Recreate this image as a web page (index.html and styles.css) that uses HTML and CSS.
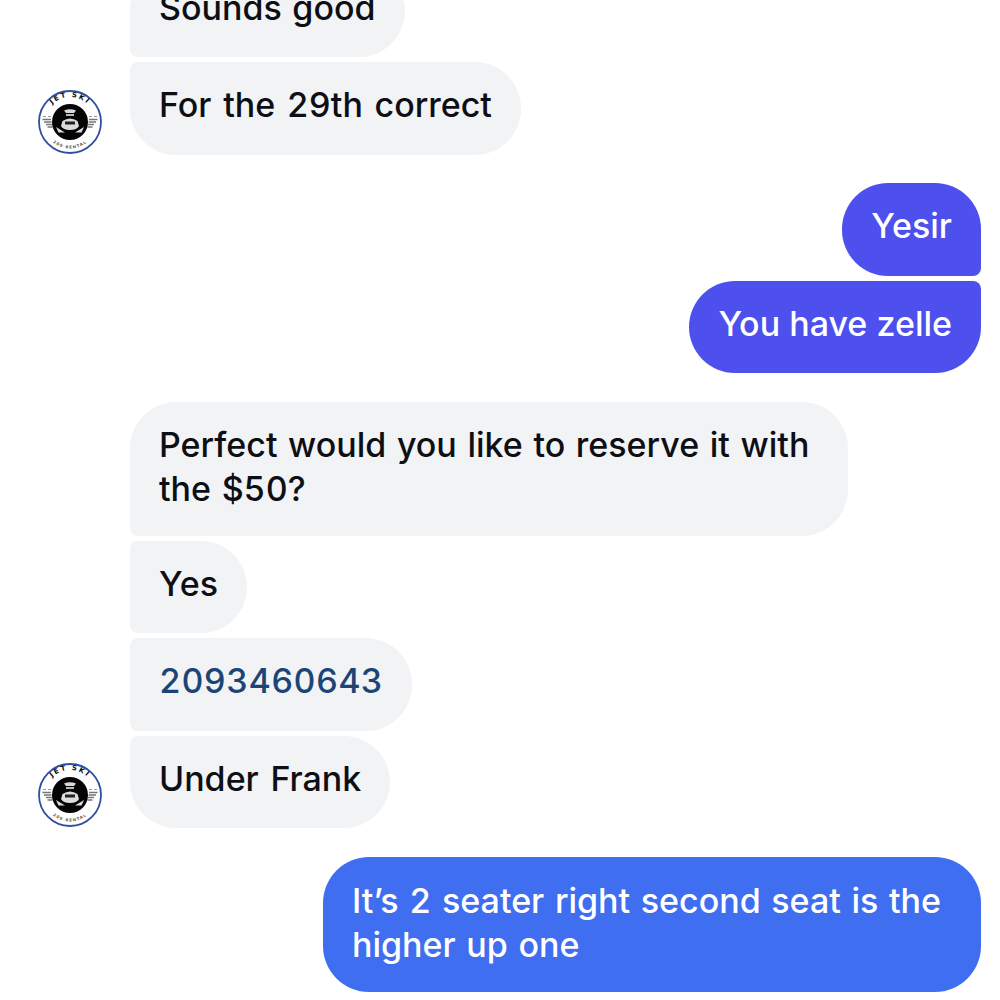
FILE: index.html
```html
<!DOCTYPE html>
<html lang="en">
<head>
<meta charset="utf-8">
<title>Conversation</title>
<link rel="stylesheet" href="styles.css">
</head>
<body>
<main class="thread">
  <section class="group">
    <div class="row"><div class="avatar-slot"></div><div class="bubble in first">Sounds good</div></div>
    <div class="row">
      <div class="avatar-slot">
        <svg class="avatar" viewBox="0 0 66 66" aria-hidden="true"><use href="#logo"/></svg>
      </div>
      <div class="bubble in last loose">For the 29th correct</div>
    </div>
  </section>
  <section class="group out">
    <div class="row"><div class="bubble sent-a first">Yesir</div></div>
    <div class="row"><div class="bubble sent-a last">You have zelle</div></div>
  </section>
  <section class="group">
    <div class="row"><div class="avatar-slot"></div><div class="bubble in first two-line wide-a">Perfect would you like to reserve it with the $50?</div></div>
    <div class="row"><div class="avatar-slot"></div><div class="bubble in mid">Yes</div></div>
    <div class="row"><div class="avatar-slot"></div><div class="bubble in mid link">2093460643</div></div>
    <div class="row">
      <div class="avatar-slot">
        <svg class="avatar" viewBox="0 0 66 66" aria-hidden="true"><use href="#logo"/></svg>
      </div>
      <div class="bubble in last loose">Under Frank</div>
    </div>
  </section>
  <section class="group out">
    <div class="row"><div class="bubble sent-b solo two-line wide-b">It’s 2 seater right second seat is the higher up one</div></div>
  </section>
</main>
<svg class="defs" aria-hidden="true">
  <defs>
    <symbol id="logo" viewBox="0 0 66 66">
      <circle cx="33" cy="33" r="31" fill="#fff" stroke="#2f4f9e" stroke-width="1.8"/>
      <path id="arcTop" d="M8 33a25 25 0 0 1 50 0" fill="none"/>
      <path id="arcBottom" d="M6.500 33a26.500 26.500 0 0 0 53 0" fill="none"/>
      <text class="logo-top"><textPath href="#arcTop" startOffset="50%" text-anchor="middle">JET SKI</textPath></text>
      <text class="logo-bottom"><textPath href="#arcBottom" startOffset="50%" text-anchor="middle">209 RENTAL</textPath></text>
      <path d="M5.500 30.500h8.500M7 33h7.500M9 35.500h6M10.500 38h5M60.500 30.500h-8.500M59 33h-7.500M57 35.500h-6M55.500 38h-5" stroke="#777" stroke-width="1.500" fill="none"/>
      <path d="M6 27.500h3M11 27.500h3M52 27.500h3M57 27.500h3" stroke="#999" stroke-width="1" fill="none"/>
      <circle cx="33" cy="33" r="18" fill="#050505"/>
      <path d="M27 21.500q6-2.500 12 0l-2 2.500h-8z" fill="#d8d8d8"/>
      <path d="M29 25h8v2h-8z" fill="#bbb"/>
      <path d="M25.500 32q7.500-5 15 0l1.500 5q-2 4-9 4t-9-4z" fill="#dcdcdc"/>
      <path d="M28 32.500h10v3h-10z" fill="#222"/>
      <path d="M19 38l9 5.500-6.500 0zM47 38l-9 5.500 6.500 0z" fill="#dcdcdc"/>
    </symbol>
  </defs>
</svg>
</body>
</html>
```
FILE: styles.css
```css
* { box-sizing: border-box; }
html, body { margin: 0; height: 100%; overflow: hidden; background: #fff; }
body { font-family: Inter, "Noto Sans", sans-serif; }
.thread {
  display: flex;
  flex-direction: column;
  gap: 28.500px;
  margin-top: -35.500px;
  padding: 0 19px 0 37px;
}
.group { display: flex; flex-direction: column; gap: 5px; }
.row { display: flex; align-items: flex-end; }
.group.out .row { justify-content: flex-end; }
.avatar-slot { flex: none; width: 93px; display: flex; align-items: flex-end; }
.avatar { display: block; width: 66px; height: 66px; }
.bubble {
  font-size: 34px;
  font-weight: 500;
  font-variant-numeric: tabular-nums;
  word-spacing: 1.500px;
  line-height: 44px;
  padding: 21px 29px 27.500px;
  color: #0d0f14;
}
.loose { word-spacing: 2.500px; }
.in { background: #f2f3f5; }
.in.first { border-radius: 46px 46px 46px 8px; }
.in.mid { border-radius: 8px 46px 46px 8px; }
.in.last { border-radius: 8px 46px 46px 46px; }
.sent-a { background: #4d50ec; color: #fff; word-spacing: 0; }
.sent-b { background: #3f6ff0; color: #fff; }
.sent-a.first { border-radius: 46px 46px 8px 46px; }
.sent-a.last { border-radius: 46px 8px 46px 46px; }
.solo { border-radius: 46px; }
.link { color: #1c4577; letter-spacing: 0.400px; }
.two-line { padding-bottom: 25px; }
.solo.two-line { padding-top: 22px; }
.wide-a { width: 718px; }
.wide-b { width: 658px; }
.defs { position: absolute; width: 0; height: 0; }
.logo-top { font: 700 7px "DejaVu Sans", sans-serif; letter-spacing: 1.700px; fill: #111; }
.logo-bottom { font: 700 4px "DejaVu Sans", sans-serif; letter-spacing: 1px; fill: #6a5a3a; }
```
